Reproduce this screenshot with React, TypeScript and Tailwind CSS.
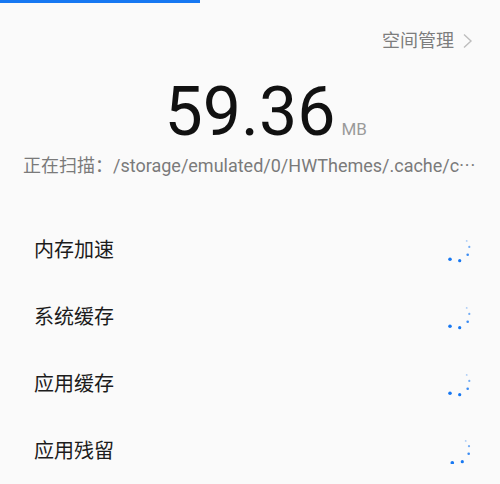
import React from "react";

const cjk = "font-['Roboto','Noto_Sans_CJK_SC',sans-serif]";

const items = ["内存加速", "系统缓存", "应用缓存", "应用残留"];

type Dot = [number, number, number, number];

const dotsA: Dot[] = [
    [20.7, 3.9, 0.9, 0.35],
    [23.3, 9.9, 1.1, 0.6],
    [21.7, 17.7, 1.3, 0.85],
    [13.7, 23.7, 1.6, 1],
    [4, 22.3, 1.8, 1],
];

const dotsB: Dot[] = [
    [19.7, 2.9, 0.9, 0.35],
    [23, 8.2, 1.1, 0.6],
    [22.7, 15.7, 1.3, 0.85],
    [16.3, 23.7, 1.6, 1],
    [6.3, 24.7, 1.8, 1],
];

function Spinner({ dots }: { dots: Dot[] }) {
    return (
        <svg width="26" height="26" viewBox="0 0 26 26">
            {dots.map(([x, y, r, o], i) => (
                <circle key={i} cx={x} cy={y} r={r} fill="#1778f2" opacity={o} />
            ))}
        </svg>
    );
}

export default function App() {
    return (
        <div className={`h-[484px] w-[500px] overflow-hidden bg-[#fafafa] ${cjk}`}>
            <div className="h-[3px] w-[200px] bg-[#1778f2]" />

            <div className="flex items-center justify-end pr-[26px] pt-[26px]">
                <span className="text-[18px] leading-[24px] text-[#7d7d7d]">
                    空间管理
                </span>
                <svg width="12" height="16" viewBox="0 0 12 16" className="ml-[8px]">
                    <path d="M2 1.5 L9 8 L2 14.5" fill="none" stroke="#bdbdbd" strokeWidth="1.4" />
                </svg>
            </div>

            <div className="mt-[25px] grid grid-cols-[1fr_auto_1fr] items-baseline">
                <div />
                <span className="font-['Roboto',sans-serif] text-[68px] leading-[68px] text-[#111]">
                    59.36
                </span>
                <span className="ml-[6px] font-['Roboto',sans-serif] text-[17px] text-[#9a9a9a]">
                    MB
                </span>
            </div>

            <div className="mt-[8px] whitespace-nowrap pl-[23px] text-[18px] leading-[24px] text-[#7a7a7a]">
                正在扫描：/storage/emulated/0/HWThemes/.cache/c
                <span className="tracking-[1px]">···</span>
            </div>

            <div className="mt-[38px]">
                {items.map((label, i) => (
                    <div
                        key={label}
                        className="flex h-[67px] items-center justify-between pl-[34px] pr-[28px]"
                    >
                        <span className="text-[20px] text-[#1c1c1c]">{label}</span>
                        <Spinner dots={i === 3 ? dotsB : dotsA} />
                    </div>
                ))}
            </div>
        </div>
    );
}
